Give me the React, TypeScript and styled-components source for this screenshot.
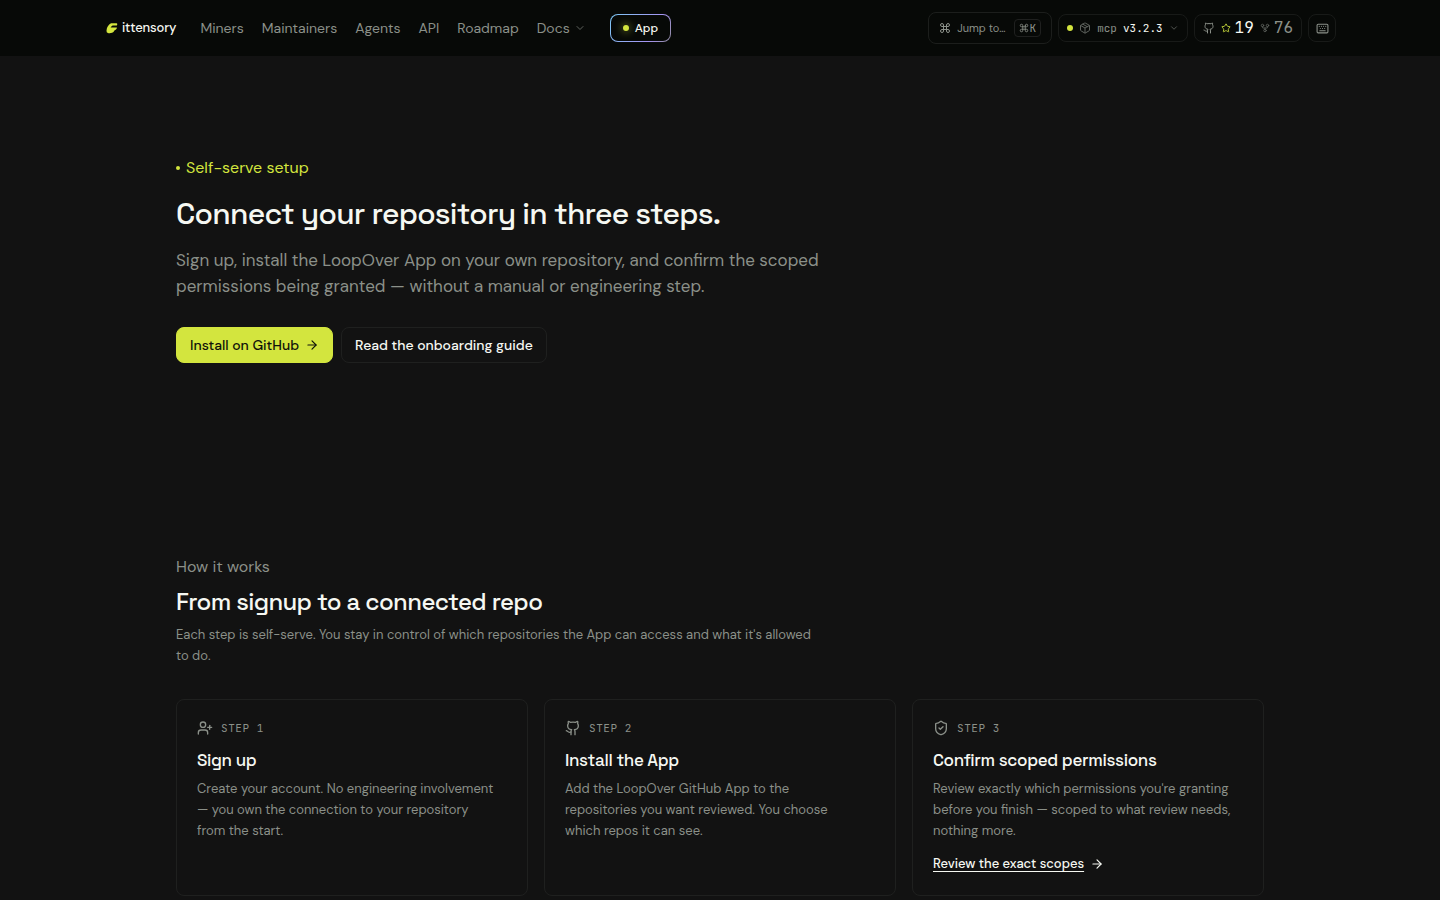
import React from "react";
import styled, { createGlobalStyle, css } from "styled-components";
import {
  ArrowRight,
  ChevronDown,
  Command,
  GitFork,
  Github,
  Keyboard,
  Package,
  ShieldCheck,
  Star,
  UserPlus,
  type LucideIcon,
} from "lucide-react";

const color = {
  page: "#121212",
  header: "#070907",
  text: "#f6f8f2",
  muted: "#8b9089",
  faint: "#5f635e",
  border: "#1f201f",
  lime: "#d3e53e",
  ink: "#10130a",
};

const sans = `"DM Sans", Inter, sans-serif`;
const display = `"Space Grotesk", Inter, sans-serif`;
const mono = `"JetBrains Mono", "DejaVu Sans Mono", monospace`;

const GlobalStyle = createGlobalStyle`
  *, *::before, *::after { box-sizing: border-box; }
  body {
    margin: 0;
    background: ${color.page};
    color: ${color.text};
    font: 400 13px/21px ${sans};
  }
  h1, h2, h3, p { margin: 0; }
  a { color: inherit; text-decoration: none; }
  button { font: inherit; color: inherit; cursor: pointer; }
  svg { flex: none; display: block; }
`;

const Header = styled.header`
  position: sticky;
  top: 0;
  z-index: 1;
  background: ${color.header};
  line-height: 20px;
`;

const HeaderInner = styled.div`
  display: flex;
  align-items: center;
  justify-content: space-between;
  max-width: 1280px;
  height: 56px;
  margin: 0 auto;
  padding: 0 24px;
`;

const HeaderLeft = styled.div`
  display: flex;
  align-items: center;
`;

const Brand = styled.a`
  display: flex;
  align-items: center;
  gap: 3px;
  margin-right: 24px;
  font-weight: 500;
  letter-spacing: -0.01em;
`;

const Nav = styled.nav`
  display: flex;
  align-items: center;
  gap: 18px;
  margin-right: 24px;
  color: ${color.muted};
  font-size: 14px;
`;

const DocsButton = styled.button`
  display: flex;
  align-items: center;
  gap: 4px;
  padding: 0;
  border: 0;
  background: none;

  svg { color: ${color.faint}; }
`;

const AppLink = styled.a`
  display: flex;
  align-items: center;
  gap: 6px;
  height: 28px;
  padding: 0 12px;
  border: 1px solid transparent;
  border-radius: 8px;
  background:
    linear-gradient(${color.header}, ${color.header}) padding-box,
    linear-gradient(120deg, #7cc8f4, #a593f2 70%, #8f8a9c) border-box;
  font-size: 12px;
  font-weight: 500;
`;

const Dot = styled.span<{ $size: number; $glow?: boolean }>`
  flex: none;
  width: ${(p) => p.$size}px;
  height: ${(p) => p.$size}px;
  border-radius: 50%;
  background: ${color.lime};
  ${(p) => p.$glow && css`box-shadow: 0 0 8px 1px rgba(211, 229, 62, 0.45);`}
`;

const HeaderTools = styled.div`
  display: flex;
  align-items: center;
  gap: 6px;
`;

const pill = css`
  display: flex;
  align-items: center;
  gap: 6px;
  height: 28px;
  padding: 0 8px;
  border: 1px solid #181a18;
  border-radius: 8px;
  background: none;
  color: ${color.muted};
  font-family: ${mono};
  font-size: 11px;
`;

const JumpButton = styled.button`
  ${pill}
  height: 32px;
  padding: 0 10px;
  border-color: #1c1e1c;
  font-family: ${sans};
`;

const Kbd = styled.kbd`
  display: flex;
  align-items: center;
  gap: 1px;
  margin-left: 2px;
  padding: 0 4px;
  border: 1px solid ${color.border};
  border-radius: 4px;
  font: 400 11px/16px ${mono};
`;

const VersionButton = styled.button`
  ${pill}

  svg { color: ${color.faint}; }
`;

const Version = styled.span`
  color: ${color.text};
`;

const RepoLink = styled.a`
  ${pill}
`;

const Stat = styled.span<{ $strong?: boolean }>`
  display: flex;
  align-items: center;
  gap: 4px;
  color: ${(p) => (p.$strong ? color.text : color.muted)};
  font-size: 16px;

  svg { color: ${(p) => (p.$strong ? color.lime : color.faint)}; }
`;

const IconButton = styled.button`
  ${pill}
  justify-content: center;
  width: 28px;
  padding: 0;
`;

const Main = styled.main`
  max-width: 1152px;
  margin: 0 auto;
  padding: 100px 32px 96px;
`;

const Hero = styled.section`
  padding-bottom: 192px;
`;

const Eyebrow = styled.p<{ $accent?: boolean }>`
  display: flex;
  align-items: center;
  gap: 6px;
  color: ${(p) => (p.$accent ? color.lime : color.muted)};
  font-size: 16px;
  line-height: 24px;
`;

const Title = styled.h1`
  margin-top: 14px;
  font: 500 30px/40px ${display};
  letter-spacing: -0.025em;
`;

const Lead = styled.p`
  max-width: 672px;
  margin-top: 13px;
  color: ${color.muted};
  font-size: 17px;
  line-height: 26px;
`;

const Actions = styled.div`
  display: flex;
  flex-wrap: wrap;
  gap: 8px;
  margin-top: 28px;
`;

const ActionLink = styled.a<{ $primary?: boolean }>`
  display: flex;
  align-items: center;
  gap: 6px;
  height: 36px;
  padding: 0 13px;
  border: 1px solid ${(p) => (p.$primary ? color.lime : color.border)};
  border-radius: 8px;
  background: ${(p) => (p.$primary ? color.lime : "transparent")};
  color: ${(p) => (p.$primary ? color.ink : color.text)};
  font-size: 14px;
  font-weight: 500;
  line-height: 20px;
`;

const SectionTitle = styled.h2`
  margin-top: 7px;
  font: 500 24px/32px ${display};
  letter-spacing: -0.025em;
`;

const SectionText = styled.p`
  max-width: 640px;
  margin-top: 6px;
  color: ${color.muted};
`;

const Steps = styled.div`
  display: grid;
  grid-template-columns: repeat(auto-fit, minmax(280px, 1fr));
  gap: 16px;
  margin-top: 33px;
`;

const Card = styled.article`
  padding: 20px 20px 21px;
  border: 1px solid ${color.border};
  border-radius: 8px;
`;

const StepLabel = styled.div`
  display: flex;
  align-items: center;
  gap: 8px;
  color: ${color.muted};
  font: 400 11px/16px ${mono};
  letter-spacing: 0.05em;
  text-transform: uppercase;
`;

const CardTitle = styled.h3`
  margin-top: 12px;
  font: 500 17px/24px ${display};
  letter-spacing: -0.02em;
`;

const CardText = styled.p`
  max-width: 299px;
  margin-top: 6px;
  color: ${color.muted};
`;

const CardLink = styled.a`
  display: inline-flex;
  align-items: center;
  gap: 6px;
  margin-top: 12px;
  font-weight: 500;

  span {
    text-decoration: underline;
    text-underline-offset: 3px;
  }
`;

const navLinks = ["Miners", "Maintainers", "Agents", "API", "Roadmap"];

type Step = { icon: LucideIcon; title: string; text: string; link?: string };

const steps: Step[] = [
  {
    icon: UserPlus,
    title: "Sign up",
    text: "Create your account. No engineering involvement — you own the connection to your repository from the start.",
  },
  {
    icon: Github,
    title: "Install the App",
    text: "Add the LoopOver GitHub App to the repositories you want reviewed. You choose which repos it can see.",
  },
  {
    icon: ShieldCheck,
    title: "Confirm scoped permissions",
    text: "Review exactly which permissions you're granting before you finish — scoped to what review needs, nothing more.",
    link: "Review the exact scopes",
  },
];

function BrandMark() {
  return (
    <svg width="15" height="16" viewBox="0 0 15 16" aria-hidden="true">
      <path
        d="M7 3.2h5.6q1 .4.6 1.6l-.4.8H8.6L6.8 7v.6h6.1q.1 1.2-.9 2l-1.6.8q-.7 1.6-2.3 2.4-2.2.7-4.2.2-1.6-.6-1.4-2.6Q3 5.4 7 3.2z"
        fill={color.lime}
      />
    </svg>
  );
}

export default function App() {
  return (
    <>
      <GlobalStyle />
      <Header>
        <HeaderInner>
          <HeaderLeft>
            <Brand href="#home">
              <BrandMark />
              ittensory
            </Brand>
            <Nav aria-label="Main">
              {navLinks.map((label) => (
                <a key={label} href={`#${label.toLowerCase()}`}>
                  {label}
                </a>
              ))}
              <DocsButton type="button">
                Docs
                <ChevronDown size={12} />
              </DocsButton>
            </Nav>
            <AppLink href="#app">
              <Dot $size={6} $glow />
              App
            </AppLink>
          </HeaderLeft>
          <HeaderTools>
            <JumpButton type="button">
              <Command size={12} />
              Jump to…
              <Kbd>
                <Command size={10} aria-label="Command" />K
              </Kbd>
            </JumpButton>
            <VersionButton type="button">
              <Dot $size={6} />
              <Package size={12} />
              mcp
              <Version>v3.2.3</Version>
              <ChevronDown size={10} />
            </VersionButton>
            <RepoLink href="#repository">
              <Github size={12} />
              <Stat $strong>
                <Star size={10} />
                19
              </Stat>
              <Stat>
                <GitFork size={10} />
                76
              </Stat>
            </RepoLink>
            <IconButton type="button" aria-label="Keyboard shortcuts">
              <Keyboard size={13} />
            </IconButton>
          </HeaderTools>
        </HeaderInner>
      </Header>
      <Main>
        <Hero>
          <Eyebrow $accent>
            <Dot $size={4} />
            Self-serve setup
          </Eyebrow>
          <Title>Connect your repository in three steps.</Title>
          <Lead>
            Sign up, install the LoopOver App on your own repository, and confirm the scoped
            permissions being granted — without a manual or engineering step.
          </Lead>
          <Actions>
            <ActionLink href="#install" $primary>
              Install on GitHub
              <ArrowRight size={14} />
            </ActionLink>
            <ActionLink href="#guide">Read the onboarding guide</ActionLink>
          </Actions>
        </Hero>
        <section>
          <Eyebrow>How it works</Eyebrow>
          <SectionTitle>From signup to a connected repo</SectionTitle>
          <SectionText>
            Each step is self-serve. You stay in control of which repositories the App can access
            and what it's allowed to do.
          </SectionText>
          <Steps>
            {steps.map(({ icon: Icon, title, text, link }, i) => (
              <Card key={title}>
                <StepLabel>
                  <Icon size={16} />
                  Step {i + 1}
                </StepLabel>
                <CardTitle>{title}</CardTitle>
                <CardText>{text}</CardText>
                {link && (
                  <CardLink href="#scopes">
                    <span>{link}</span>
                    <ArrowRight size={14} />
                  </CardLink>
                )}
              </Card>
            ))}
          </Steps>
        </section>
      </Main>
    </>
  );
}
